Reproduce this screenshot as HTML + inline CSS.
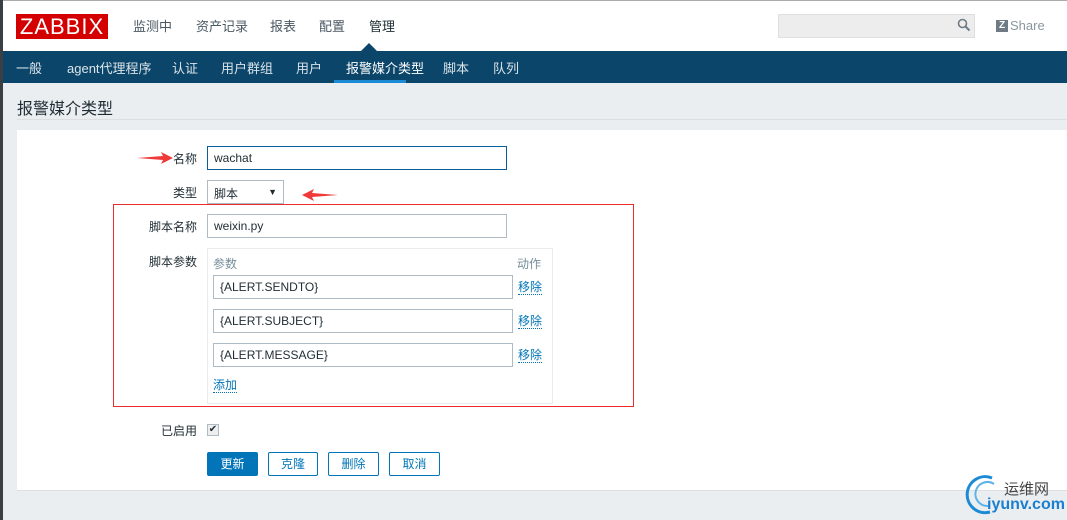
<!DOCTYPE html>
<html><head><meta charset="utf-8"><style>
*{margin:0;padding:0;box-sizing:border-box}
body{width:1067px;height:520px;overflow:hidden;background:#ebeef0;font-family:"Liberation Sans","Noto Sans CJK SC",sans-serif;font-size:12px;color:#1f2c33;position:relative}
.a{position:absolute}
.hdr{left:0;top:0;width:1067px;height:51px;background:#fff;border-top:1px solid #aaa}
.nav{left:0;top:51px;width:1067px;height:32px;background:#0b466a}
.nav span{position:absolute;top:7px;color:#fff;font-size:13px;opacity:.85}
.top span{position:absolute;top:16px;font-size:13px;color:#4a5863}
.inp{position:absolute;background:#fff;border:1px solid #acbbc5;height:24px;padding:4px 6px;font-size:12px;color:#1f2c33}
.lbl{position:absolute;width:120px;text-align:right;font-size:12px}
.lnk{position:absolute;color:#0275b8;border-bottom:1px dotted #0275b8;line-height:14px;font-size:12px}
.btn{position:absolute;top:452px;height:24px;border:1px solid #0275b8;border-radius:2px;color:#0275b8;background:#fff;text-align:center;line-height:22px;font-size:12px}
</style></head><body>
<div class="a hdr"></div>
<div class="a" style="left:16px;top:14px;width:92px;height:25px;background:#d40000;color:#fff;font-size:22px;line-height:25px;text-align:center;letter-spacing:1px">ZABBIX</div>
<div class="top"><span style="left:133px">监测中</span><span style="left:196px">资产记录</span><span style="left:270px">报表</span><span style="left:319px">配置</span><span style="left:369px;color:#1f2c33">管理</span></div>
<div class="a" style="left:778px;top:14px;width:197px;height:24px;background:#ededed;border:1px solid #dfdfdf"></div>
<svg class="a" style="left:957px;top:18px" width="14" height="14"><circle cx="5.5" cy="5.5" r="4" fill="none" stroke="#6e7b85" stroke-width="1.6"/><line x1="8.5" y1="8.5" x2="12.5" y2="12.5" stroke="#6e7b85" stroke-width="2"/></svg>
<div class="a" style="left:996px;top:20px;width:12px;height:12px;background:#6e7b85;color:#fff;font-size:10px;font-weight:bold;line-height:12px;text-align:center">Z</div>
<div class="a" style="left:1010px;top:18px;color:#8a969f;font-size:13px">Share</div>
<div class="a nav"></div>
<div class="a" style="left:361px;top:43px;width:0;height:0;border-left:8px solid transparent;border-right:8px solid transparent;border-bottom:8px solid #0b466a"></div>
<div class="nav a" style="background:none"><span style="left:16px">一般</span><span style="left:67px">agent代理程序</span><span style="left:172px">认证</span><span style="left:221px">用户群组</span><span style="left:296px">用户</span><span style="left:346px;opacity:1">报警媒介类型</span><span style="left:443px">脚本</span><span style="left:493px">队列</span></div>
<div class="a" style="left:334px;top:80px;width:72px;height:3px;background:#1a8bd4"></div>
<div class="a" style="left:0;top:0;width:3px;height:520px;background:#3a3f44"></div>
<div class="a" style="left:17px;top:95px;font-size:16px;color:#1f2c33">报警媒介类型</div>
<div class="a" style="left:17px;top:119px;width:1050px;height:1px;background:#dcdfe1"></div>
<div class="a" style="left:17px;top:130px;width:1050px;height:361px;background:#fff;border-bottom:1px solid #dcdfe1"></div>
<div class="lbl" style="left:77px;top:150px">名称</div>
<div class="inp" style="left:207px;top:146px;width:300px;border-color:#0b5d97">wachat</div>
<div class="lbl" style="left:77px;top:184px">类型</div>
<div class="inp" style="left:207px;top:180px;width:77px">脚本<span style="position:absolute;right:6px;top:6px;font-size:9px">▼</span></div>
<div class="a" style="left:113px;top:204px;width:521px;height:203px;border:1px solid #ee2b2b"></div>
<div class="lbl" style="left:77px;top:218px">脚本名称</div>
<div class="inp" style="left:207px;top:214px;width:300px">weixin.py</div>
<div class="lbl" style="left:77px;top:253px">脚本参数</div>
<div class="a" style="left:207px;top:248px;width:346px;height:156px;border:1px solid #ebebeb"></div>
<div class="a" style="left:213px;top:255px;color:#768d99">参数</div>
<div class="a" style="left:517px;top:255px;color:#768d99">动作</div>
<div class="inp" style="left:213px;top:275px;width:300px">{ALERT.SENDTO}</div>
<div class="lnk" style="left:518px;top:280px">移除</div>
<div class="inp" style="left:213px;top:309px;width:300px">{ALERT.SUBJECT}</div>
<div class="lnk" style="left:518px;top:314px">移除</div>
<div class="inp" style="left:213px;top:343px;width:300px">{ALERT.MESSAGE}</div>
<div class="lnk" style="left:518px;top:348px">移除</div>
<div class="lnk" style="left:213px;top:378px">添加</div>
<div class="lbl" style="left:77px;top:422px">已启用</div>
<div class="a" style="left:207px;top:424px;width:12px;height:12px;border:1px solid #acbbc5;background:#eee;font-size:10px;line-height:10px;text-align:center">✔</div>
<div class="btn" style="left:207px;width:51px;background:#0275b8;color:#fff">更新</div>
<div class="btn" style="left:268px;width:50px">克隆</div>
<div class="btn" style="left:328px;width:51px">删除</div>
<div class="btn" style="left:389px;width:51px">取消</div>
<svg class="a" style="left:135px;top:150px" width="40" height="16"><path d="M2 8 L28 6 L26 2 L38 8 L26 14 L28 10 Z" fill="#f03a3a"/></svg>
<svg class="a" style="left:300px;top:187px" width="40" height="16"><path d="M38 8 L12 6 L14 2 L2 8 L14 14 L12 10 Z" fill="#f03a3a"/></svg>
<svg class="a" style="left:962px;top:472px" width="42" height="44"><path d="M30 6 A18 18 0 1 0 28 40" fill="none" stroke="#1a8bd4" stroke-width="3"/><path d="M32 12 A12 12 0 1 0 26 34" fill="none" stroke="#5bb3e8" stroke-width="2"/></svg>
<div class="a" style="left:1004px;top:478px;font-size:15px;color:#444">运维网</div>
<div class="a" style="left:987px;top:496px;font-size:16px;font-weight:bold;color:#1a7fd0">iyunv.com</div>
</body></html>
